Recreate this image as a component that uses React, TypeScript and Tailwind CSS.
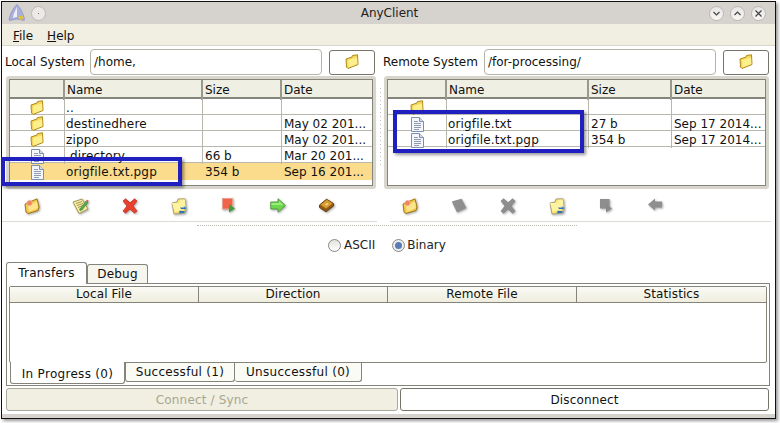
import { ReactNode } from "react";

const FONT = "font-['DejaVu_Sans',sans-serif]";

function Folder() {
  return (
    <svg width="14" height="16" viewBox="0 0 14 16">
      <path d="M1 5 L7 3 L7.5 1.5 L12.5 .8 L13 10.5 L3 14.5 L1.5 13 Z" fill="#f5d65c" stroke="#b08a1a" strokeWidth="1" />
      <path d="M3 6 L12 3.5 L12.3 10 L3.5 13.5 Z" fill="#fdf08c" />
    </svg>
  );
}

function DocIcon() {
  return (
    <svg width="13" height="15" viewBox="0 0 13 15">
      <path d="M.5 .5 H8.5 L12.5 4.5 V14.5 H.5 Z" fill="#f4f6fa" stroke="#7d8fae" />
      <path d="M8.5 .5 V4.5 H12.5" fill="#d5dcea" stroke="#7d8fae" />
      <path d="M3 4.5 H7 M3 6.5 H10 M3 8.5 H10 M3 10.5 H10 M3 12.5 H8" stroke="#8f9bb0" />
    </svg>
  );
}

function OpenStar() {
  return (
    <svg width="16" height="16" viewBox="0 0 16 16">
      <path d="M1 6 L8 3 L13 .8 L15 9 L14 12.5 L4 15.5 L2 14 Z" fill="#f3c94c" stroke="#a07818" />
      <path d="M4 8 L13 3.5 L14 10 L5 14 Z" fill="#fde48a" />
      <circle cx="5.5" cy="5" r="2.6" fill="#f0835a" stroke="#e8b0a0" strokeWidth=".7" />
    </svg>
  );
}

function Note() {
  return (
    <svg width="17" height="16" viewBox="0 0 17 16">
      <path d="M1 4 L10 1 L16 11 L7 15.5 Z" fill="#f5eaa0" stroke="#a89a58" />
      <path d="M4 5.5 L10 3.5 M5 7.5 L11 5.5 M6 9.5 L11 7.5 M7 11.5 L10 10" stroke="#a89a58" />
      <path d="M8 11 L14 3 L16 4.5 L10 12 L8 12.5 Z" fill="#58b04c" stroke="#3c7c34" strokeWidth=".6" />
      <path d="M14 3 L16 4.5 L16.6 2.6 L15 1.8 Z" fill="#dd5a48" />
    </svg>
  );
}

function Cross({ gray }: { gray?: boolean }) {
  const c = gray ? "#8e8e8e" : "#e8402c";
  return (
    <svg width="16" height="16" viewBox="0 0 16 16">
      <path d="M1 3 L3.5 .8 L8 4.8 L12.5 .8 L15 3 L11 8 L15 13 L12.5 15.2 L8 11 L3.5 15.2 L1 13 L5 8 Z" fill={c} stroke={gray ? "#858585" : "#c22a1c"} strokeWidth=".7" />
    </svg>
  );
}

function FolderSync() {
  return (
    <svg width="16" height="17" viewBox="0 0 16 17">
      <path d="M1 5 L6 4 L7 1 L14 .8 L15 11 L14 15 L3 16 Z" fill="#fbe26c" stroke="#a6a080" />
      <path d="M1 5 L8 5 L9 2 L14 1.5 L14.5 10 L4 14 Z" fill="#fff3a0" />
      <path d="M9 9.5 H13.5 L12.5 8 L15.5 10 L13 12 L13.5 11 H10 Z M14 13 H9.5 L10.5 12 L7.5 14 L10 16 L9.5 15 H13 Z" fill="#2a74c8" />
    </svg>
  );
}

function StopPlay() {
  return (
    <svg width="14" height="15" viewBox="0 0 14 15">
      <rect x=".5" y=".5" width="10" height="10.5" fill="#f0654a" stroke="#e4a090" />
      <path d="M7 6 L13 10.5 L7 14.5 Z" fill="#3d9e3a" />
    </svg>
  );
}

function GrayStop() {
  return (
    <svg width="14" height="15" viewBox="0 0 14 15">
      <rect x="1" y="1" width="9.5" height="9.5" fill="#8e8e8e" />
      <path d="M7 6 L13 10.5 L7 14.5 Z" fill="#8a8a8a" />
    </svg>
  );
}

function RightArrow() {
  return (
    <svg width="16" height="15" viewBox="0 0 16 15">
      <path d="M.7 4 H8 V.7 L15.4 7.5 L8 14.3 V11 H.7 Z" fill="#6cd64c" stroke="#4c8c3a" strokeWidth=".8" />
      <path d="M1.5 5 H9 V3 L13 7 H1.5 Z" fill="#9cec78" />
    </svg>
  );
}

function LeftArrow() {
  return (
    <svg width="16" height="13" viewBox="0 0 16 13">
      <path d="M15 3.5 H8 V.5 L1 6.5 L8 12.5 V9.5 H15 Z" fill="#8e8e8e" />
    </svg>
  );
}

function Book() {
  return (
    <svg width="17" height="15" viewBox="0 0 17 15">
      <path d="M1.5 7 L8.5 1.2 L15.5 5.5 L15.5 8 L8 13.8 L1.5 9.5 Z" fill="#8f5a16" stroke="#63400f" strokeWidth="1" strokeLinejoin="round" />
      <path d="M2.5 6.8 L8.8 1.8 L14.6 5.4 L8 10.4 Z" fill="#d99c30" strokeLinejoin="round" />
      <path d="M7 6.4 L9 5 L10.4 6 L8.4 7.6 Z" fill="#f4dc8c" />
    </svg>
  );
}

function GrayNote() {
  return (
    <svg width="16" height="15" viewBox="0 0 16 15">
      <path d="M.8 3.5 L10.5 .8 L15.4 10 L6 14.5 Z" fill="#8e8e8e" />
    </svg>
  );
}

function Logo() {
  return (
    <svg width="18" height="18" viewBox="0 0 18 18">
      <path d="M9 .6 C12 3 16 11 16.5 16 C14 16.8 12 15 9 15 C6 15 3 17 1 16 C2 10 6 3 9 .6 Z" fill="#a9b0dc" stroke="#8b91bf" strokeWidth=".8" />
      <path d="M9 3 C7 7 5 11 5 14 C7 13 8 13 9 13 Z" fill="#eceef8" />
      <path d="M10 13 L14 11 L16 14 L12 16 Z" fill="#e2c23c" />
    </svg>
  );
}

function WinButton({ children }: { children?: ReactNode }) {
  return (
    <div className="flex h-[15px] w-[15px] items-center justify-center rounded-full border border-[#bcb8b4] bg-[linear-gradient(#e8e6e4,#f8f7f6)]">
      {children}
    </div>
  );
}

function PathRow({ label, path, labelWidth }: { label: string; path: string; labelWidth: string }) {
  return (
    <div className="flex h-[30px] items-center pt-[2px]">
      <span className={`${labelWidth} shrink-0 text-[12px] text-[#111]`}>{label}</span>
      <div className="flex h-[26px] w-[232px] shrink-0 items-center rounded-[4px] border border-[#b5b3a6] bg-white pl-[3px] text-[12px] text-[#111]">
        {path}
      </div>
      <div className="ml-[7px] flex h-[25px] w-[46px] shrink-0 items-center justify-center rounded-[3px] border border-[#76746a] bg-white">
        <Folder />
      </div>
    </div>
  );
}

type Row = { icon: "folder" | "doc" | "none"; name: string; size: string; date: string; selected?: boolean };

function FileTable({ cols, rows, width }: { cols: string; rows: Row[]; width: string }) {
  return (
    <div className={`${width} h-[113px] shrink-0 rounded-[3px] border-[3px] border-[#d8d6cc] bg-white`}>
      <div className="h-full border border-[#85847a]">
        <div className={`grid ${cols} h-[19px] border-b-2 border-[#85847a] bg-[#f0efe4] text-[12px] text-[#111]`}>
          <div className="border-r-2 border-[#9a998e]" />
          <div className="border-r-2 border-[#9a998e] pl-[2px] leading-[20px]">Name</div>
          <div className="border-r-2 border-[#9a998e] pl-[2px] leading-[20px]">Size</div>
          <div className="pl-[2px] leading-[20px]">Date</div>
        </div>
        {rows.map((r) => (
          <div
            key={r.name + r.icon}
            className={`grid ${cols} text-[12px] leading-[15px] text-[#111] ${r.selected ? "h-[17px] bg-[#fbdb8c]" : "h-[16px] border-b border-[#b8b7ae]"}`}
          >
            <div className={`flex items-center justify-center pt-[1px] ${r.selected ? "" : "border-r border-[#b8b7ae]"}`}>
              {r.icon === "folder" && <Folder />}
              {r.icon === "doc" && <DocIcon />}
            </div>
            <div className={`whitespace-nowrap pl-[1px] pt-[2px] tracking-[0.15px] ${r.selected ? "" : "border-r border-[#b8b7ae]"}`}>{r.name}</div>
            <div className={`pl-[2px] pt-[2px] ${r.selected ? "" : "border-r border-[#b8b7ae]"}`}>{r.size}</div>
            <div className="pl-[2px] pt-[2px] whitespace-nowrap">{r.date}</div>
          </div>
        ))}
      </div>
    </div>
  );
}

const localRows: Row[] = [
  { icon: "folder", name: "..", size: "", date: "" },
  { icon: "folder", name: "destinedhere", size: "", date: "May 02 201..." },
  { icon: "folder", name: "zippo", size: "", date: "May 02 201..." },
  { icon: "doc", name: ".directory", size: "66 b", date: "Mar 20 201..." },
  { icon: "doc", name: "origfile.txt.pgp", size: "354 b", date: "Sep 16 201...", selected: true },
];

const remoteRows: Row[] = [
  { icon: "folder", name: "", size: "", date: "" },
  { icon: "doc", name: "origfile.txt", size: "27 b", date: "Sep 17 2014..." },
  { icon: "doc", name: "origfile.txt.pgp", size: "354 b", date: "Sep 17 2014..." },
];

export default function App() {
  const toolCell = "flex w-[49px] justify-center drop-shadow-[1px_1px_1px_rgba(0,0,0,0.35)]";
  return (
    <div className={`${FONT} relative h-[423px] w-[780px] overflow-hidden bg-white`}>
      <div className="ml-px mt-px flex h-[418px] w-[775px] flex-col border-x border-y border-[#111] shadow-[2px_2px_3px_rgba(0,0,0,0.4)]">
        {/* title bar */}
        <div className="flex h-[22px] shrink-0 items-center bg-[#d6d2ce] pl-[6px] pr-[9px]">
          <Logo />
          <div className="ml-[5px] flex h-[15px] w-[15px] items-center justify-center rounded-full border border-[#bcb8b4] bg-[#eceae8]">
            <div className="h-px w-px bg-[#777]" />
          </div>
          <div className="flex-1 pl-[24px] text-center text-[12px] text-[#222]">AnyClient</div>
          <div className="flex gap-[6px]">
            <WinButton>
              <svg width="9" height="9" viewBox="0 0 9 9"><path d="M1.5 3 L4.5 6 L7.5 3" fill="none" stroke="#444" strokeWidth="1.2" /></svg>
            </WinButton>
            <WinButton>
              <svg width="9" height="9" viewBox="0 0 9 9"><path d="M1.5 6 L4.5 3 L7.5 6" fill="none" stroke="#444" strokeWidth="1.2" /></svg>
            </WinButton>
            <WinButton>
              <svg width="9" height="9" viewBox="0 0 9 9"><path d="M1.5 1.5 L7.5 7.5 M7.5 1.5 L1.5 7.5" fill="none" stroke="#444" strokeWidth="1.2" /></svg>
            </WinButton>
          </div>
        </div>

        {/* menu */}
        <div className="flex h-[22px] shrink-0 items-center gap-[14px] border-b border-[#d8d6cc] bg-[#f0efe2] pl-[11px] pt-[2px] text-[12px] text-[#111]">
          <span><span className="underline">F</span>ile</span>
          <span><span className="underline">H</span>elp</span>
        </div>

        {/* file panes */}
        <div className="flex shrink-0 pl-[3px]">
          <div className="w-[372px] shrink-0">
            <PathRow label="Local System" path="/home," labelWidth="w-[85px]" />
          </div>
          <div className="ml-[6px] w-[388px] shrink-0">
            <PathRow label="Remote System" path="/for-processing/" labelWidth="w-[101px]" />
          </div>
        </div>
        <div className="flex shrink-0 pl-[4px]">
          <FileTable
            width="w-[370px]"
            cols="grid-cols-[55px_138px_79px_1fr]"
            rows={localRows}
          />
          <div className="flex w-[8px] shrink-0 flex-col items-center gap-[3px] pt-[12px]">
            {Array.from({ length: 20 }).map((_, i) => (
              <div key={i} className="h-px w-px bg-[#c4c3bb]" />
            ))}
          </div>
          <FileTable
            width="w-[385px]"
            cols="grid-cols-[59px_142px_83px_1fr]"
            rows={remoteRows}
          />
        </div>

        {/* toolbars */}
        <div className="flex h-[32px] shrink-0 items-center pl-[5px] pt-[2px]">
          <div className="flex w-[378px] shrink-0">
            <div className={toolCell}><OpenStar /></div>
            <div className={toolCell}><Note /></div>
            <div className={toolCell}><Cross /></div>
            <div className={toolCell}><FolderSync /></div>
            <div className={`${toolCell} ml-[1px]`}><StopPlay /></div>
            <div className={toolCell}><RightArrow /></div>
            <div className={toolCell}><Book /></div>
          </div>
          <div className="flex">
            <div className={toolCell}><OpenStar /></div>
            <div className={toolCell}><GrayNote /></div>
            <div className={toolCell}><Cross gray /></div>
            <div className={toolCell}><FolderSync /></div>
            <div className={toolCell}><GrayStop /></div>
            <div className={toolCell}><LeftArrow /></div>
          </div>
        </div>
        <div className="flex h-[1px] shrink-0">
          <div className="w-[375px] bg-[#dddcd4]" />
          <div className="ml-[13px] w-[381px] bg-[#dddcd4]" />
        </div>
        <div className="mt-[3px] ml-[195px] h-px w-[380px] shrink-0 border-t border-dotted border-[#bdbcb4]" />

        {/* transfer mode */}
        <div className="mt-[11px] flex h-[16px] shrink-0 items-center pl-[326px] text-[12px] text-[#222]">
          <div className="h-[13px] w-[13px] rounded-full border border-[#8a8a84] bg-[linear-gradient(#e2e2de,#fff)]" />
          <span className="ml-[3px]">ASCII</span>
          <div className="ml-[17px] flex h-[13px] w-[13px] items-center justify-center rounded-full border border-[#8a8a84] bg-[#eee]">
            <div className="h-[7px] w-[7px] rounded-full bg-[#5a7cb4]" />
          </div>
          <span className="ml-[2px]">Binary</span>
        </div>

        {/* tabs */}
        <div className="mt-[9px] flex h-[21px] shrink-0 items-end pl-[4px] text-[12px] tracking-[0.2px] text-[#111]">
          <div className="relative z-10 -mb-px flex h-[22px] w-[81px] items-center justify-center rounded-t-[3px] border-x border-t border-[#85847a] bg-white pb-[2px]">Transfers</div>
          <div className="flex h-[19px] w-[61px] items-center justify-center rounded-t-[3px] border-x border-t border-[#85847a] bg-[#f6f5ee]">Debug</div>
        </div>
        <div className="ml-[4px] flex h-[103px] w-[764px] shrink-0 flex-col border border-[#85847a] bg-white pl-[2px] pr-[2px] pt-[2px]">
          <div className="flex h-[77px] shrink-0 flex-col rounded-[2px] border border-[#85847a]">
            <div className="grid h-[16px] grid-cols-4 border-b border-[#85847a] bg-[linear-gradient(#fbfaf5,#eeedde)] text-center text-[12px] leading-[15px] tracking-[0.1px] text-[#111]">
              <div className="border-r border-[#85847a]">Local File</div>
              <div className="border-r border-[#85847a]">Direction</div>
              <div className="border-r border-[#85847a]">Remote File</div>
              <div>Statistics</div>
            </div>
          </div>
          <div className="flex h-[21px] shrink-0 items-start pl-[1px] text-[12px] tracking-[0.3px] text-[#111]">
            <div className="relative z-10 -mt-px flex h-[22px] w-[115px] items-center justify-center rounded-b-[3px] border-x border-b border-[#85847a] bg-white pt-[2px]">In Progress (0)</div>
            <div className="flex h-[19px] w-[110px] items-center justify-center rounded-b-[3px] border-x border-b border-[#85847a] bg-[#fbfbf6]">Successful (1)</div>
            <div className="flex h-[19px] w-[127px] items-center justify-center rounded-b-[3px] border-r border-b border-[#85847a] bg-[#fbfbf6]">Unsuccessful (0)</div>
          </div>
        </div>

        {/* connect buttons */}
        <div className="mt-[2px] flex shrink-0 gap-[2px] pl-[4px] tracking-[0.15px]">
          <div className="flex h-[23px] w-[392px] items-center justify-center rounded-[3px] border border-[#a9a89c] bg-[#f0efe2] text-[12px] text-[#a8a690]">Connect / Sync</div>
          <div className="flex h-[23px] w-[369px] items-center justify-center rounded-[3px] border border-[#76746a] bg-white text-[12px] text-[#111]">Disconnect</div>
        </div>
        <div className="mt-auto h-[4px] shrink-0 bg-[#d6d2ce]" />
      </div>

      {/* annotation boxes drawn over the screenshot */}
      <div className="absolute left-[1px] top-[157px] h-[29px] w-[181px] border-[4px] border-[#2020c0] shadow-[2px_2px_3px_rgba(0,0,0,0.4)]" />
      <div className="absolute left-[393px] top-[110px] h-[43px] w-[191px] border-[4px] border-[#2020c0] shadow-[2px_2px_3px_rgba(0,0,0,0.4)]" />
    </div>
  );
}
